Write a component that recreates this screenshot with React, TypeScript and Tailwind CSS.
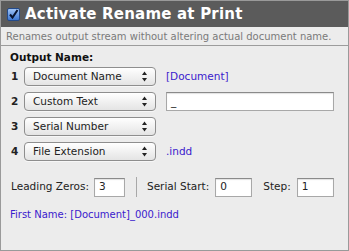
import React from 'react';

const font = { fontFamily: '"DejaVu Sans", "Liberation Sans", sans-serif' };

function Stepper() {
  return (
    <svg width="7" height="11" viewBox="0 0 7 11" className="shrink-0">
      <path d="M3.5 0.5 L6 4 L1 4 Z" fill="#222" />
      <path d="M3.5 10.5 L6 7 L1 7 Z" fill="#222" />
    </svg>
  );
}

function PopUp({ label }: { label: string }) {
  return (
    <div className="flex h-[19px] w-[132px] shrink-0 items-center justify-between rounded-[4px] border border-[#8e8e8e] bg-gradient-to-b from-[#ffffff] to-[#e4e4e4] pl-[8px] pr-[7px] text-[10.5px] text-[#222] shadow-[0_1px_0_rgba(255,255,255,0.6)]">
      <span className="whitespace-nowrap leading-none">{label}</span>
      <Stepper />
    </div>
  );
}

function Field({ value, w }: { value: string; w: string }) {
  return (
    <div className={`flex h-[19px] shrink-0 items-center border border-[#a8a8a8] border-t-[#8a8a8a] bg-white px-[4px] text-[10.5px] text-[#222] shadow-[inset_0_1px_1px_rgba(0,0,0,0.12)] ${w}`}>
      {value}
    </div>
  );
}

const rows = [
  { n: '1', label: 'Document Name', extra: 'doc' },
  { n: '2', label: 'Custom Text', extra: 'input' },
  { n: '3', label: 'Serial Number', extra: '' },
  { n: '4', label: 'File Extension', extra: 'ext' },
];

export default function App() {
  return (
    <div className="h-[251px] w-[349px] overflow-hidden border border-[#9a9a9a] bg-[#ececec]" style={font}>
      {/* Header */}
      <div className="flex h-[26px] items-center gap-[5px] bg-[#5b5b5b] pl-[6px]">
        <div className="flex h-[13px] w-[13px] items-center justify-center rounded-[2px] border border-[#234a8a] bg-gradient-to-b from-[#9fc3f5] to-[#3c76d0]">
          <svg width="11" height="11" viewBox="0 0 11 11">
            <path d="M2 5.5 L4.5 8.5 L9.5 1" stroke="#081430" strokeWidth="2" fill="none" />
          </svg>
        </div>
        <span className="whitespace-nowrap text-[15px] font-bold leading-none tracking-[0.2px] text-white">Activate Rename at Print</span>
      </div>

      {/* Description */}
      <div className="flex h-[19px] items-center whitespace-nowrap border-b border-[#9c9c9c] pl-[5px] text-[10px] text-[#7a7a7a]">
        Renames output stream without altering actual document name.
      </div>

      <div className="pl-[9px] pr-[14px] pt-[5px]">
        <p className="h-[13px] text-[10.5px] font-bold leading-[13px] text-[#111]">Output Name:</p>

        <div className="mt-[3px] flex flex-col gap-[6px]">
          {rows.map((r) => (
            <div key={r.n} className="flex h-[19px] items-center">
              <span className="w-[14px] shrink-0 pl-[1px] text-[10.5px] font-bold text-[#222]">{r.n}</span>
              <PopUp label={r.label} />
              {r.extra === 'doc' && <span className="ml-[10px] text-[10.5px] text-[#3a20cc]">[Document]</span>}
              {r.extra === 'ext' && <span className="ml-[10px] text-[10.5px] text-[#3a20cc]">.indd</span>}
              {r.extra === 'input' && (
                <div className="ml-[10px]">
                  <Field value="_" w="w-[168px]" />
                </div>
              )}
            </div>
          ))}
        </div>

        <div className="mt-[16px] flex h-[20px] items-center whitespace-nowrap text-[10.5px] text-[#222]">
          <span className="shrink-0 pl-[1px]">Leading Zeros:</span>
          <div className="ml-[5px]"><Field value="3" w="w-[31px]" /></div>
          <div className="ml-[11px] mr-[10px] h-[20px] w-px shrink-0 bg-[#a8a8a8]" />
          <span className="shrink-0">Serial Start:</span>
          <div className="ml-[6px]"><Field value="0" w="w-[37px]" /></div>
          <span className="ml-[11px] shrink-0">Step:</span>
          <div className="ml-[6px]"><Field value="1" w="w-[37px]" /></div>
        </div>

        <p className="mt-[11px] h-[13px] whitespace-nowrap text-[10px] leading-[13px] text-[#3a20cc]">First Name: [Document]_000.indd</p>
      </div>
    </div>
  );
}
